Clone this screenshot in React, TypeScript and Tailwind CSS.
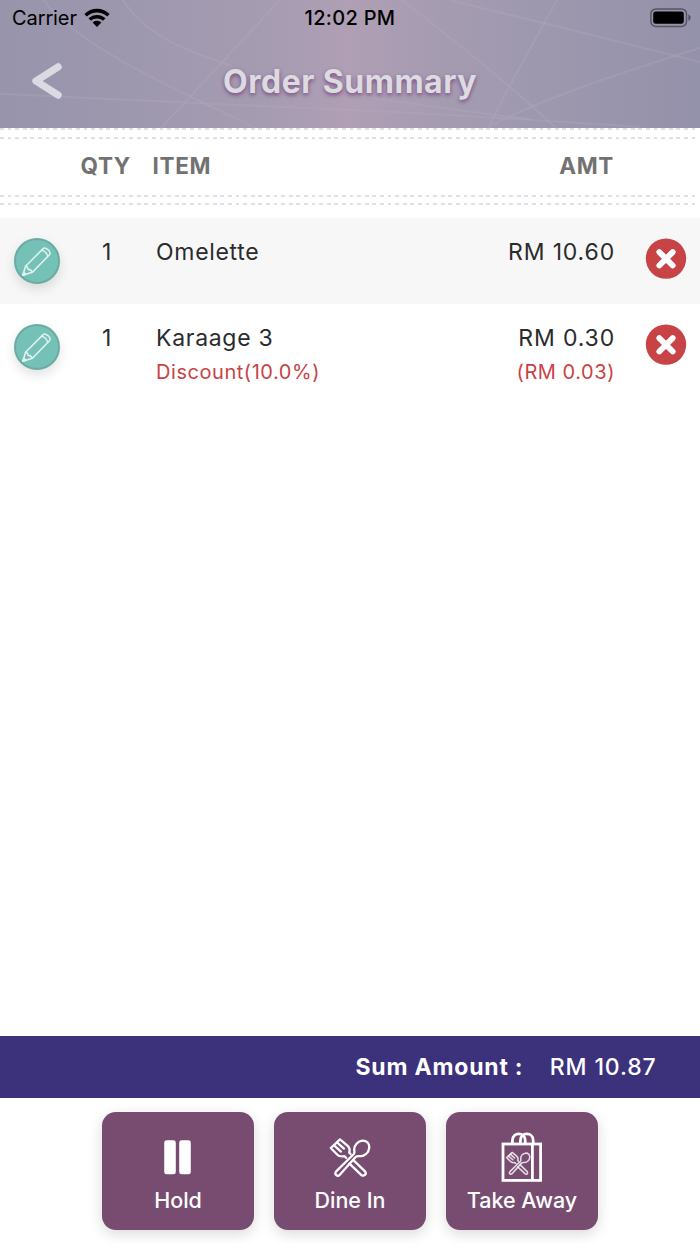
import React, { useState } from 'react';

type OrderItem = {
    id: number;
    qty: number;
    name: string;
    amount: string;
    discountLabel?: string;
    discount?: string;
};

const initialItems: OrderItem[] = [
    { id: 1, qty: 1, name: 'Omelette', amount: 'RM 10.60' },
    { id: 2, qty: 1, name: 'Karaage 3', amount: 'RM 0.30', discountLabel: 'Discount(10.0%)', discount: '(RM 0.03)' },
];

const WifiIcon: React.FC = () => (
    <svg width="26" height="20" viewBox="0 0 26 20">
        <path d="M0.4 6.1C7.4 -0.9 18.6 -0.9 25.6 6.1L23.2 8.6C17.5 3 8.5 3 2.8 8.6Z" fill="#000" />
        <path d="M4.5 10.3C9.2 5.8 16.8 5.8 21.5 10.3L19 12.8C15.7 9.6 10.3 9.6 7 12.8Z" fill="#000" />
        <path d="M13 18.9L8.6 14.5C11 12.2 15 12.2 17.4 14.5Z" fill="#000" />
    </svg>
);

const BatteryIcon: React.FC = () => (
    <svg width="42" height="20" viewBox="0 0 42 20" fill="none">
        <rect x="0.9" y="0.9" width="35.6" height="17.6" rx="5" stroke="#000" strokeOpacity="0.42" strokeWidth="1.5" />
        <rect x="3.2" y="3.4" width="30.6" height="12.4" rx="2.4" fill="#000" />
        <path d="M38.4 6.6C41.4 7.6 41.4 11.8 38.4 12.8Z" fill="#000" fillOpacity="0.45" />
    </svg>
);

const PencilIcon: React.FC = () => (
    <svg width="46" height="46" viewBox="0 0 46 46" fill="none" stroke="#e0f3f0" strokeWidth="1.5" strokeLinejoin="round" strokeLinecap="round">
        <path d="M11.6 28.2L29.4 10.4C31.4 8.5 37.6 14 35.7 16.4L18.4 34.2L8.8 37.2Z" />
        <path d="M11.6 28.2C13 28.6 14 29.4 14 31.2C16 31.2 17.4 32.2 18.4 34.2" />
        <path d="M27.6 12.2C30.2 12.4 33.2 15.2 33.6 18.4" />
        <path d="M9.8 34.4L11.8 36.2L8.8 37.2Z" fill="#e0f3f0" />
    </svg>
);

const DeleteIcon: React.FC = () => (
    <svg width="42" height="42" viewBox="0 0 42 42" fill="none">
        <circle cx="21" cy="20.6" r="20.2" fill="#c84345" />
        <path d="M14.3 14.1L27.7 27.5M27.7 14.1L14.3 27.5" stroke="#fff" strokeWidth="5.8" strokeLinecap="round" />
    </svg>
);

const HoldIcon: React.FC = () => (
    <svg width="28" height="36" viewBox="0 0 28 36" fill="#fff">
        <rect x="0.2" y="1.3" width="11.6" height="34" rx="2.4" />
        <rect x="15.2" y="1.3" width="11.6" height="34" rx="2.4" />
    </svg>
);

// Crossed fork and spoon, outlined
const CutleryShape: React.FC = () => (
    <g fill="none" stroke="#fff" strokeLinejoin="round" strokeLinecap="round">
        <path d="M24.4 24.2L36 35.4C38.2 38.2 34.8 41 32.2 38.8L20.4 27.6" />
        <path d="M17.2 21.8L15.4 20.2C12.4 20.8 9.6 20.2 7.8 18.2L1.8 12L11 3.4L18.4 9.6C20.6 11.6 21.2 13.8 20.2 16.6L21.6 18" />
        <path d="M4.8 9.2L12 15.6M7.9 6.3L15 12.6" />
        <path d="M26.4 21.2L10.8 38.8C8.4 41 4.8 38.4 7.2 35.4L24.8 18C26 16.6 25.2 15.4 25.2 13.4C25.4 9 29 5 33.4 4.6C37.8 4.4 40.6 7.4 40.2 11.8C39.8 16.4 35.8 20.2 31.6 20.2C29.6 20.2 27.8 19.8 26.4 21.2Z" />
    </g>
);

const DineInIcon: React.FC = () => (
    <svg width="42" height="42" viewBox="0 0 42 42" strokeWidth="2.3">
        <CutleryShape />
    </svg>
);

const TakeAwayIcon: React.FC = () => (
    <svg width="42" height="52" viewBox="0 0 42 52" fill="none" stroke="#fff" strokeWidth="2.8">
        <rect x="2" y="13" width="37.6" height="36.4" />
        <path d="M31.4 13V49" />
        <path d="M11.4 13V9.4C11.4 0.8 24.2 0.8 24.2 9.4V13" />
        <path d="M19.4 13V9.4C19.4 0.8 32.2 0.8 32.2 9.4V13" />
        <g transform="translate(4.6 19.4) scale(0.6)" strokeOpacity="0.8" strokeWidth="2.6">
            <CutleryShape />
        </g>
    </svg>
);

const HeaderLines: React.FC = () => (
    <svg className="absolute inset-0" width="700" height="128" viewBox="0 0 700 128" fill="none" stroke="#b5abbf" strokeOpacity="0.3" strokeWidth="2">
        <path d="M43 0C75 42 150 78 256 128" />
        <path d="M123 0C145 36 190 52 232 66" />
        <path d="M280 0L161 128" />
        <path d="M0 94C120 99 240 106 350 110C450 114 560 122 640 127" />
        <path d="M350 95C400 101 450 110 530 119" />
        <path d="M402 0C450 38 500 76 556 128" />
        <path d="M557 0C530 50 500 100 489 128" />
        <path d="M450 0L700 62" />
        <path d="M700 48C610 76 540 100 490 126" />
    </svg>
);

const DashedLine: React.FC = () => (
    <div className="h-0.5 w-[696px] bg-[repeating-linear-gradient(90deg,#dfdfe6_0px,#dfdfe6_3.8px,transparent_3.8px,transparent_7.6px)]"></div>
);

const actions = [
    { label: 'Hold', icon: <HoldIcon /> },
    { label: 'Dine In', icon: <DineInIcon /> },
    { label: 'Take Away', icon: <TakeAwayIcon /> },
];

const App: React.FC = () => {
    const [items, setItems] = useState<OrderItem[]>(initialItems);

    const removeItem = (id: number) => {
        setItems(items.filter((item) => item.id !== id));
    };

    return (
        <div className="flex h-[1244px] w-[700px] flex-col overflow-hidden bg-white font-['Inter',sans-serif] text-[#2b2b2d]">
            {/* Status bar and title */}
            <header className="relative h-32 shrink-0 bg-[linear-gradient(90deg,#9794ac_0%,#a099af_25%,#a79cb2_40%,#b09fb5_50%,#a79cb2_60%,#9d98ae_78%,#9491aa_100%)]">
                <HeaderLines />
                <div className="relative grid h-[34px] grid-cols-3 items-center pr-2 pl-3 text-black">
                    <div className="flex items-center gap-[7px]">
                        <span className="text-[20px] leading-[36px] tracking-[-0.1px]">Carrier</span>
                        <WifiIcon />
                    </div>
                    <span className="pr-1 text-center text-[20px] leading-[36px] font-medium tracking-[0.3px]">12:02 PM</span>
                    <div className="flex justify-end"><BatteryIcon /></div>
                </div>
                <div className="relative flex h-[94px] items-center justify-center">
                    <button className="absolute top-[26px] left-[30px]">
                        <svg width="34" height="42" viewBox="0 0 34 42" fill="none" stroke="#dadae4" strokeWidth="7.4" strokeLinecap="round" strokeLinejoin="round">
                            <path d="M28 7L6 21L28 35" />
                        </svg>
                    </button>
                    <h1 className="pt-0.5 text-[32px] leading-[94px] font-bold tracking-[0.5px] text-[#dbdbe0] [text-shadow:0_2px_4px_#7a4a80]">Order Summary</h1>
                </div>
            </header>

            {/* Column titles */}
            <div className="flex h-[90px] shrink-0 flex-col">
                <DashedLine />
                <div className="h-[7px]"></div>
                <DashedLine />
                <div className="flex h-[56px] items-center pr-[86px] pb-0.5 pl-[80.5px] text-[22.5px] leading-[54px] font-bold tracking-[0.65px] text-[#727272]">
                    <span className="w-[72px]">QTY</span>
                    <span className="grow">ITEM</span>
                    <span>AMT</span>
                </div>
                <DashedLine />
                <div className="h-[6px]"></div>
                <DashedLine />
            </div>

            {/* Order items */}
            <main className="grow">
                {items.map((item) => (
                    <div key={item.id} className="flex h-[86px] items-start pr-[13px] pl-[13.5px] odd:bg-[#f7f7f7]">
                        <button className="mt-5 h-[46px] w-[46px] rounded-full border-2 border-[#68ada4] bg-[#76c1b7] shadow-[0_5px_12px_rgba(0,0,0,0.12)]">
                            <span className="-m-0.5 block"><PencilIcon /></span>
                        </button>
                        <span className="mt-[18px] ml-[42.5px] w-[54px] text-[23px] leading-8">{item.qty}</span>
                        <div className="grow pt-[18px]">
                            <p className="text-[23px] leading-8 tracking-[0.7px]">{item.name}</p>
                            <p className="mt-px text-[20px] leading-[34px] tracking-[0.55px] text-[#c84345]">{item.discountLabel}</p>
                        </div>
                        <div className="mr-[30px] pt-[18px] text-right">
                            <p className="text-[23px] leading-8 tracking-[0.85px]">{item.amount}</p>
                            <p className="mt-px text-[20px] leading-[34px] tracking-[0.55px] text-[#c84345]">{item.discount}</p>
                        </div>
                        <button className="mt-5" onClick={() => removeItem(item.id)}>
                            <DeleteIcon />
                        </button>
                    </div>
                ))}
            </main>

            {/* Total */}
            <div className="flex h-[62px] shrink-0 items-center justify-end bg-[#3c327b] pr-[43.5px] text-[23px] leading-[62px] text-white">
                <span className="mr-[26.5px] font-bold tracking-[0.8px]">Sum Amount :</span>
                <span className="font-medium tracking-[0.85px]">RM 10.87</span>
            </div>

            {/* Actions */}
            <footer className="flex h-[146px] shrink-0 justify-center gap-5 pt-3.5">
                {actions.map((action) => (
                    <button key={action.label} className="flex h-[118px] w-[152px] flex-col items-center rounded-[14px] bg-[#784b71] shadow-[0_4px_14px_rgba(0,0,0,0.15)]">
                        <div className="mt-[18px] flex h-[54px] items-center">{action.icon}</div>
                        <span className="text-[21.5px] leading-8 font-medium text-white">{action.label}</span>
                    </button>
                ))}
            </footer>
        </div>
    );
};

export default App;
